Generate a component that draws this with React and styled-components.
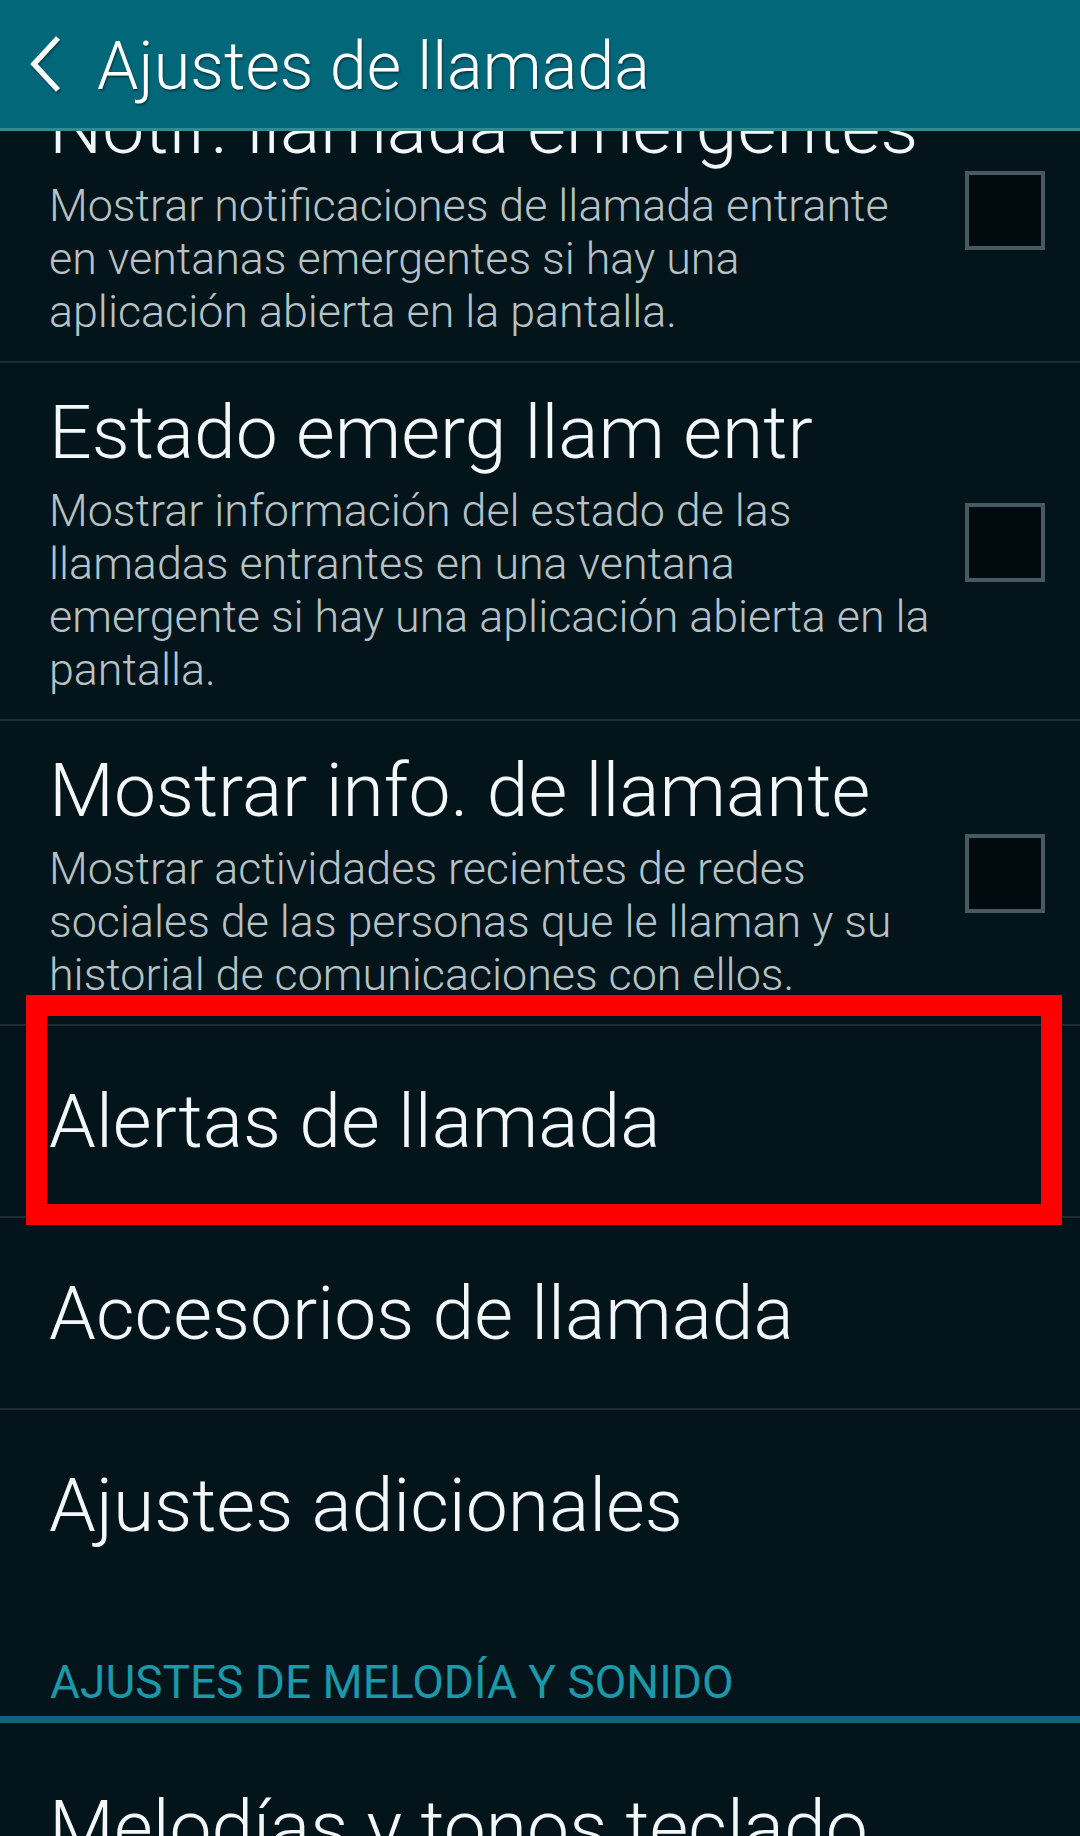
import React from 'react';
import styled, { createGlobalStyle } from 'styled-components';

const GlobalStyle = createGlobalStyle`
  html, body {
    margin: 0;
    padding: 0;
    background: #04141b;
  }
  body {
    font-family: Roboto, "Noto Sans", "Liberation Sans", sans-serif;
    -webkit-font-smoothing: antialiased;
  }
`;

const Screen = styled.div`
  width: 1080px;
  height: 1836px;
  overflow: hidden;
  display: flex;
  flex-direction: column;
  background: #04141b;
`;

const Header = styled.header`
  flex: none;
  height: 128px;
  display: flex;
  align-items: center;
  gap: 35px;
  padding-left: 30px;
  background: #03677a;
  border-bottom: 3px solid #3a8793;
  position: relative;
  z-index: 1;
`;

const BackButton = styled.div`
  width: 32px;
  height: 58px;
  display: flex;
  filter: drop-shadow(1px 2px 1px rgba(0, 0, 0, 0.35));
`;

const HeaderTitle = styled.h1`
  margin: 5px 0 0;
  font-size: 66.5px;
  font-weight: 300;
  color: #ffffff;
  line-height: 1;
  text-shadow: 1px 2px 2px rgba(0, 0, 0, 0.4);
`;

const Viewport = styled.div`
  flex: 1;
  overflow: hidden;
`;

const List = styled.div`
  margin-top: -73px;
`;

const Item = styled.div`
  position: relative;
  display: flex;
  align-items: center;
  padding: ${(p) => (p.$single ? '0' : '25px 0 23px')};
  padding-top: ${(p) => (p.$afterHeader ? '18px' : undefined)};
  min-height: ${(p) => (p.$single ? '192px' : '0')};
  padding-left: 49px;
  padding-right: 35px;
  box-sizing: border-box;
  border-bottom: 2px solid ${(p) => (p.$noDivider ? 'transparent' : '#1d2d33')};
`;

const ItemText = styled.div`
  flex: 1;
  min-width: 0;
`;

const Title = styled.div`
  font-size: 75px;
  font-weight: 300;
  line-height: 88px;
  color: #f3f7f8;
  white-space: nowrap;
`;

const Summary = styled.div`
  margin-top: 8px;
  font-size: 44.8px;
  font-weight: 300;
  line-height: 53px;
  color: #b6c2c5;
`;

const SummaryLine = styled.div`
  white-space: nowrap;
`;

const Checkbox = styled.div`
  flex: none;
  width: 72px;
  height: 71px;
  border: 4px solid #48595f;
  background: #010b0f;
  margin-left: 20px;
`;

const Highlight = styled.div`
  position: absolute;
  top: -31px;
  bottom: -9px;
  left: 26px;
  right: 18px;
  border: 21px solid #ff0000;
  pointer-events: none;
`;

const SectionHeader = styled.div`
  height: 121px;
  display: flex;
  align-items: flex-end;
  padding: 0 0 11px 50px;
  box-sizing: border-box;
  font-size: 46px;
  font-weight: 400;
  line-height: 1;
  color: #1b98a9;
  border-bottom: 7px solid #15607e;
`;

const BackIcon = () => (
  <svg width="32" height="58" viewBox="0 0 32 58">
    <path d="M28 3 L4 29 L28 55" fill="none" stroke="#ffffff" strokeWidth="5.5" strokeLinecap="butt" strokeLinejoin="miter" />
  </svg>
);

const items = [
  {
    title: 'Notif. llamada emergentes',
    lines: [
      'Mostrar notificaciones de llamada entrante',
      'en ventanas emergentes si hay una',
      'aplicación abierta en la pantalla.',
    ],
    checkbox: true,
  },
  {
    title: 'Estado emerg llam entr',
    lines: [
      'Mostrar información del estado de las',
      'llamadas entrantes en una ventana',
      'emergente si hay una aplicación abierta en la',
      'pantalla.',
    ],
    checkbox: true,
  },
  {
    title: 'Mostrar info. de llamante',
    lines: [
      'Mostrar actividades recientes de redes',
      'sociales de las personas que le llaman y su',
      'historial de comunicaciones con ellos.',
    ],
    checkbox: true,
  },
  { title: 'Alertas de llamada', highlighted: true },
  { title: 'Accesorios de llamada' },
  { title: 'Ajustes adicionales', noDivider: true },
];

const SettingRow = ({ item, afterHeader }) => {
  const single = !item.lines;
  return (
    <Item $single={single} $noDivider={item.noDivider} $afterHeader={afterHeader}>
      <ItemText>
        <Title>{item.title}</Title>
        {item.lines && (
          <Summary>
            {item.lines.map((line) => (
              <SummaryLine key={line}>{line}</SummaryLine>
            ))}
          </Summary>
        )}
      </ItemText>
      {item.checkbox && <Checkbox />}
      {item.highlighted && <Highlight />}
    </Item>
  );
};

export default function App() {
  return (
    <Screen>
      <GlobalStyle />
      <Header>
        <BackButton>
          <BackIcon />
        </BackButton>
        <HeaderTitle>Ajustes de llamada</HeaderTitle>
      </Header>
      <Viewport>
        <List>
          {items.map((item) => (
            <SettingRow key={item.title} item={item} />
          ))}
          <SectionHeader>AJUSTES DE MELODÍA Y SONIDO</SectionHeader>
          <SettingRow afterHeader item={{ title: 'Melodías y tonos teclado' }} />
        </List>
      </Viewport>
    </Screen>
  );
}
